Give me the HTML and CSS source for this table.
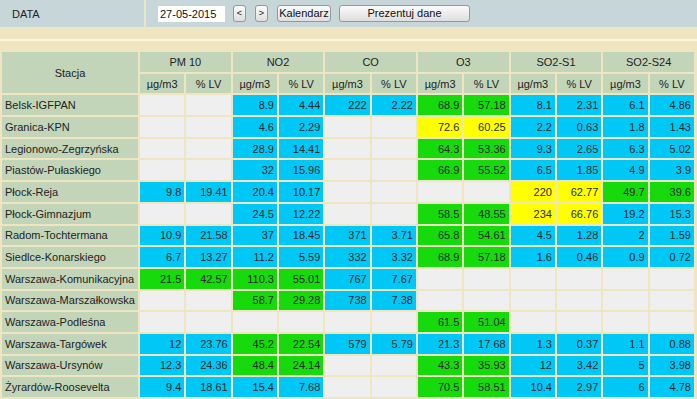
FILE: index.html
```html
<!DOCTYPE html>
<html lang="pl">
<head>
<meta charset="utf-8">
<title>Dane</title>
<link rel="stylesheet" href="styles.css">
</head>
<body>
<div class="topbar">
  <div class="label">DATA</div>
  <div class="controls">
    <input class="date" type="text" value="27-05-2015">
    <button class="btn small">&lt;</button>
    <button class="btn small next">&gt;</button>
    <button class="btn cal">Kalendarz</button>
    <button class="btn show">Prezentuj dane</button>
  </div>
</div>
<div class="spacer"><div class="line"></div></div>
<table class="data">
  <colgroup><col class="c-st"><col span="12"></colgroup>
  <thead>
    <tr><th rowspan="2">Stacja</th><th colspan="2">PM 10</th><th colspan="2">NO2</th><th colspan="2">CO</th><th colspan="2">O3</th><th colspan="2">SO2-S1</th><th colspan="2">SO2-S24</th></tr>
    <tr><th>µg/m3</th><th>% LV</th><th>µg/m3</th><th>% LV</th><th>µg/m3</th><th>% LV</th><th>µg/m3</th><th>% LV</th><th>µg/m3</th><th>% LV</th><th>µg/m3</th><th>% LV</th></tr>
  </thead>
  <tbody>
    <tr><td class="st">Belsk-IGFPAN</td><td class="e"></td><td class="e"></td><td class="b">8.9</td><td class="b">4.44</td><td class="b">222</td><td class="b">2.22</td><td class="g">68.9</td><td class="g">57.18</td><td class="b">8.1</td><td class="b">2.31</td><td class="b">6.1</td><td class="b">4.86</td></tr>
    <tr><td class="st">Granica-KPN</td><td class="e"></td><td class="e"></td><td class="b">4.6</td><td class="b">2.29</td><td class="e"></td><td class="e"></td><td class="y">72.6</td><td class="y">60.25</td><td class="b">2.2</td><td class="b">0.63</td><td class="b">1.8</td><td class="b">1.43</td></tr>
    <tr><td class="st">Legionowo-Zegrzyńska</td><td class="e"></td><td class="e"></td><td class="b">28.9</td><td class="b">14.41</td><td class="e"></td><td class="e"></td><td class="g">64.3</td><td class="g">53.36</td><td class="b">9.3</td><td class="b">2.65</td><td class="b">6.3</td><td class="b">5.02</td></tr>
    <tr><td class="st">Piastów-Pułaskiego</td><td class="e"></td><td class="e"></td><td class="b">32</td><td class="b">15.96</td><td class="e"></td><td class="e"></td><td class="g">66.9</td><td class="g">55.52</td><td class="b">6.5</td><td class="b">1.85</td><td class="b">4.9</td><td class="b">3.9</td></tr>
    <tr><td class="st">Płock-Reja</td><td class="b">9.8</td><td class="b">19.41</td><td class="b">20.4</td><td class="b">10.17</td><td class="e"></td><td class="e"></td><td class="e"></td><td class="e"></td><td class="y">220</td><td class="y">62.77</td><td class="g">49.7</td><td class="g">39.6</td></tr>
    <tr><td class="st">Płock-Gimnazjum</td><td class="e"></td><td class="e"></td><td class="b">24.5</td><td class="b">12.22</td><td class="e"></td><td class="e"></td><td class="g">58.5</td><td class="g">48.55</td><td class="y">234</td><td class="y">66.76</td><td class="b">19.2</td><td class="b">15.3</td></tr>
    <tr><td class="st">Radom-Tochtermana</td><td class="b">10.9</td><td class="b">21.58</td><td class="b">37</td><td class="b">18.45</td><td class="b">371</td><td class="b">3.71</td><td class="g">65.8</td><td class="g">54.61</td><td class="b">4.5</td><td class="b">1.28</td><td class="b">2</td><td class="b">1.59</td></tr>
    <tr><td class="st">Siedlce-Konarskiego</td><td class="b">6.7</td><td class="b">13.27</td><td class="b">11.2</td><td class="b">5.59</td><td class="b">332</td><td class="b">3.32</td><td class="g">68.9</td><td class="g">57.18</td><td class="b">1.6</td><td class="b">0.46</td><td class="b">0.9</td><td class="b">0.72</td></tr>
    <tr><td class="st">Warszawa-Komunikacyjna</td><td class="g">21.5</td><td class="g">42.57</td><td class="g">110.3</td><td class="g">55.01</td><td class="b">767</td><td class="b">7.67</td><td class="e"></td><td class="e"></td><td class="e"></td><td class="e"></td><td class="e"></td><td class="e"></td></tr>
    <tr><td class="st">Warszawa-Marszałkowska</td><td class="e"></td><td class="e"></td><td class="g">58.7</td><td class="g">29.28</td><td class="b">738</td><td class="b">7.38</td><td class="e"></td><td class="e"></td><td class="e"></td><td class="e"></td><td class="e"></td><td class="e"></td></tr>
    <tr><td class="st">Warszawa-Podleśna</td><td class="e"></td><td class="e"></td><td class="e"></td><td class="e"></td><td class="e"></td><td class="e"></td><td class="g">61.5</td><td class="g">51.04</td><td class="e"></td><td class="e"></td><td class="e"></td><td class="e"></td></tr>
    <tr><td class="st">Warszawa-Targówek</td><td class="b">12</td><td class="b">23.76</td><td class="g">45.2</td><td class="g">22.54</td><td class="b">579</td><td class="b">5.79</td><td class="b">21.3</td><td class="b">17.68</td><td class="b">1.3</td><td class="b">0.37</td><td class="b">1.1</td><td class="b">0.88</td></tr>
    <tr><td class="st">Warszawa-Ursynów</td><td class="b">12.3</td><td class="b">24.36</td><td class="g">48.4</td><td class="g">24.14</td><td class="e"></td><td class="e"></td><td class="g">43.3</td><td class="g">35.93</td><td class="b">12</td><td class="b">3.42</td><td class="b">5</td><td class="b">3.98</td></tr>
    <tr><td class="st">Żyrardów-Roosevelta</td><td class="b">9.4</td><td class="b">18.61</td><td class="b">15.4</td><td class="b">7.68</td><td class="e"></td><td class="e"></td><td class="g">70.5</td><td class="g">58.51</td><td class="b">10.4</td><td class="b">2.97</td><td class="b">6</td><td class="b">4.78</td></tr>
  </tbody>
</table>
</body>
</html>
```

FILE: styles.css
```css
html, body {
  margin: 0;
  padding: 0;
}
body {
  background: #efe6c1;
  font-family: "Liberation Sans", Arial, sans-serif;
  font-size: 11px;
  color: #222;
  width: 697px;
  height: 399px;
  overflow: hidden;
}
.topbar {
  display: flex;
  height: 27px;
  gap: 2px;
  background: #ece6c8;
}
.topbar .label {
  width: 144px;
  background: #c7d7d9;
  padding-left: 12px;
  box-sizing: border-box;
  display: flex;
  align-items: center;
  font-size: 11px;
  color: #222;
}
.topbar .controls {
  flex: 1;
  background: #c7d7d9;
  display: flex;
  align-items: center;
  padding-left: 12px;
}
.date {
  width: 67px;
  height: 16px;
  box-sizing: border-box;
  border: none;
  background: #fff;
  padding: 0 2px;
  margin: 0;
  font-family: "Liberation Sans", Arial, sans-serif;
  font-size: 11px;
  color: #111;
}
.btn {
  height: 17px;
  box-sizing: border-box;
  margin: 0;
  padding: 0;
  border: 1px solid #979797;
  border-radius: 3px;
  background: linear-gradient(#fbfbfb, #dedede);
  font-family: "Liberation Sans", Arial, sans-serif;
  font-size: 11px;
  color: #111;
  line-height: 15px;
}
.btn.small {
  width: 13px;
  font-size: 9px;
  margin-left: 8px;
}
.btn.next {
  margin-left: 9px;
}
.btn.cal {
  width: 54px;
  margin-left: 9px;
}
.btn.show {
  width: 131px;
  margin-left: 8px;
}
.spacer {
  height: 23px;
  display: flex;
  flex-direction: column;
  justify-content: flex-start;
}
.spacer .line {
  margin-top: 12px;
  height: 2px;
  background: #faf6e2;
}
.data {
  table-layout: fixed;
  width: 696px;
  border-collapse: separate;
  border-spacing: 2px;
  margin-top: 0;
}
.data col.c-st {
  width: 136px;
}
.data th, .data td {
  height: 19.7px;
  padding: 0 3px;
  font-weight: normal;
  white-space: nowrap;
  overflow: hidden;
  box-sizing: border-box;
}
.data th {
  background: #c2d5b9;
  text-align: center;
  color: #222;
}
.data td {
  text-align: right;
  color: #2b2b2b;
}
.data td.st {
  background: #c2d5b9;
  text-align: left;
  color: #222;
}
.data td.e { background: #efefef; }
.data td.b { background: #00c8f6; }
.data td.g { background: #16da0c; }
.data td.y { background: #ffff00; }
```
